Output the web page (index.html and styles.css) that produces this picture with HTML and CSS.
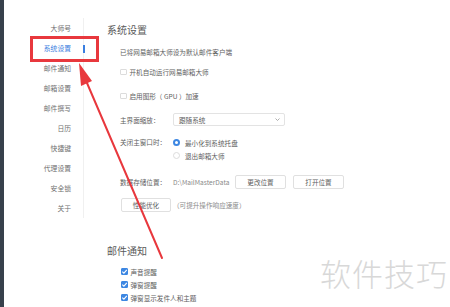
FILE: index.html
```html
<!DOCTYPE html>
<html lang="zh">
<head>
<meta charset="utf-8">
<link rel="stylesheet" href="styles.css">
</head>
<body>
<div class="app">
  <div class="edge"></div>
  <nav class="side">
    <ul class="menu">
      <li class="item">大师号</li>
      <li class="item active">系统设置</li>
      <li class="item">邮件通知</li>
      <li class="item">邮箱设置</li>
      <li class="item">邮件撰写</li>
      <li class="item">日历</li>
      <li class="item">快捷键</li>
      <li class="item">代理设置</li>
      <li class="item">安全锁</li>
      <li class="item">关于</li>
    </ul>
  </nav>
  <main class="main">
    <h2 class="title">系统设置</h2>
    <div class="row desc">已将网易邮箱大师设为默认邮件客户端</div>
    <label class="row opt1"><span class="cb"></span>开机自动运行网易邮箱大师</label>
    <label class="row opt2"><span class="cb"></span>启用图形（ GPU ）加速</label>
    <div class="row zoomrow">
      <span class="lbl">主界面缩放：</span>
      <div class="select"><span>跟随系统</span>
        <svg class="chev" width="5" height="3" viewBox="0 0 5 3"><path d="M0.5 0.5 L2.5 2.5 L4.5 0.5" fill="none" stroke="#999" stroke-width="0.8"/></svg>
      </div>
    </div>
    <div class="row closerow">
      <span class="lbl">关闭主窗口时：</span>
      <div class="radios">
        <label class="radio-line"><span class="rb on"></span>最小化到系统托盘</label>
        <label class="radio-line"><span class="rb"></span>退出邮箱大师</label>
      </div>
    </div>
    <div class="row datarow">
      <span class="lbl">数据存储位置：</span>
      <span class="path">D:\MailMasterData</span>
      <button class="btn">更改位置</button>
      <button class="btn">打开位置</button>
    </div>
    <div class="row perfrow">
      <button class="btn perf">性能优化</button>
      <span class="hint">（可提升操作响应速度）</span>
    </div>
    <h2 class="title title2">邮件通知</h2>
    <label class="row chk first"><span class="cb on"><svg width="7" height="7" viewBox="0 0 7 7"><path d="M1.3 3.6 L2.9 5.1 L5.8 1.9" fill="none" stroke="#fff" stroke-width="1.1"/></svg></span>声音提醒</label>
    <label class="row chk"><span class="cb on"><svg width="7" height="7" viewBox="0 0 7 7"><path d="M1.3 3.6 L2.9 5.1 L5.8 1.9" fill="none" stroke="#fff" stroke-width="1.1"/></svg></span>弹窗提醒</label>
    <label class="row chk"><span class="cb on"><svg width="7" height="7" viewBox="0 0 7 7"><path d="M1.3 3.6 L2.9 5.1 L5.8 1.9" fill="none" stroke="#fff" stroke-width="1.1"/></svg></span>弹窗显示发件人和主题</label>
  </main>
</div>
<div class="highlight"></div>
<svg class="arrow" width="450" height="307" viewBox="0 0 450 307">
  <line x1="84" y1="76" x2="162" y2="258" stroke="#e8383d" stroke-width="2" stroke-linecap="round"/>
  <polygon points="79,63 92,81 81,86" fill="#e8383d"/>
</svg>
<div class="watermark">软件技巧</div>
</body>
</html>
```
FILE: styles.css
```css
* { box-sizing: border-box; }
html, body { margin: 0; padding: 0; background: #fff; }
body {
  width: 450px;
  height: 307px;
  overflow: hidden;
  position: relative;
  font-family: "Noto Sans CJK SC", "Noto Sans", sans-serif;
  color: #555;
}
.app { display: flex; height: 307px; }
.edge { width: 4px; flex: none; background: #37414c; }
.side { width: 80px; flex: none; }
.menu {
  list-style: none;
  margin: 18px 0 0 0;
  padding: 0;
  border-right: 1px solid #f0f0f0;
}
.item {
  height: 20px;
  line-height: 20px;
  font-size: 6.8px;
  color: #707070;
  text-align: right;
  padding-right: 12px;
  position: relative;
}
.item.active { color: #3a7ee0; }
.item.active::after {
  content: "";
  position: absolute;
  right: -1.5px;
  top: 7px;
  width: 2px;
  height: 8px;
  background: #3a7ee0;
}
.main {
  flex: 1;
  padding: 23px 0 0 23px;
  display: flex;
  flex-direction: column;
  align-items: flex-start;
}
.title {
  margin: 0;
  font-size: 10px;
  line-height: 14px;
  font-weight: normal;
  color: #5a5a5a;
}
.row {
  display: flex;
  align-items: center;
  margin-left: 13px;
  font-size: 6.6px;
  color: #606060;
}
.desc { height: 10px; margin-top: 10px; }
.opt1 { height: 10px; margin-top: 10px; }
.opt2 { height: 10px; margin-top: 14px; }
.cb {
  width: 6.5px;
  height: 6.5px;
  border: 1px solid #dcdcdc;
  border-radius: 1px;
  margin-right: 3px;
  flex: none;
  background: #fff;
  display: flex;
  align-items: center;
  justify-content: center;
}
.cb.on { background: #3d87e2; border-color: #3d87e2; }
.cb.on svg { flex: none; }
.lbl { width: 53px; flex: none; }
.zoomrow { height: 13px; margin-top: 12px; }
.select {
  width: 112px;
  height: 13px;
  border: 1px solid #e3e3e3;
  border-radius: 2px;
  display: flex;
  align-items: center;
  justify-content: space-between;
  padding: 0 4px 0 5px;
  color: #606060;
}
.closerow { margin-top: 10px; align-items: flex-start; }
.closerow .lbl { height: 13px; line-height: 13px; }
.radios { display: flex; flex-direction: column; }
.radio-line { display: flex; align-items: center; height: 13px; }
.rb {
  width: 7px;
  height: 7px;
  border-radius: 50%;
  border: 1px solid #dcdcdc;
  margin-right: 5px;
  flex: none;
}
.rb.on { border: 2px solid #3d87e2; background: #fff; }
.datarow { height: 14px; margin-top: 13px; }
.path { width: 62px; flex: none; color: #8a8a8a; }
.btn {
  font-family: inherit;
  font-size: 6.6px;
  color: #606060;
  background: #fff;
  border: 1px solid #e0e0e0;
  border-radius: 2px;
  height: 14px;
  width: 51px;
  padding: 0;
  margin: 0 7px 0 0;
  line-height: 12px;
}
.perfrow { height: 14px; margin-top: 9px; margin-left: 14px; }
.btn.perf { width: 50px; margin-right: 2px; }
.hint { color: #8a8a8a; }
.title2 { margin-top: 32px; }
.chk { height: 13px; margin-left: 14px; }
.chk.first { margin-top: 7px; }
.highlight {
  position: absolute;
  left: 30px;
  top: 36px;
  width: 69px;
  height: 26px;
  border: 3px solid #e8383d;
}
.arrow { position: absolute; left: 0; top: 0; pointer-events: none; }
.watermark {
  position: absolute;
  left: 320px;
  top: 254px;
  font-size: 31px;
  line-height: 38px;
  color: #d8d8d8;
  letter-spacing: 1px;
  font-weight: 300;
}
```
